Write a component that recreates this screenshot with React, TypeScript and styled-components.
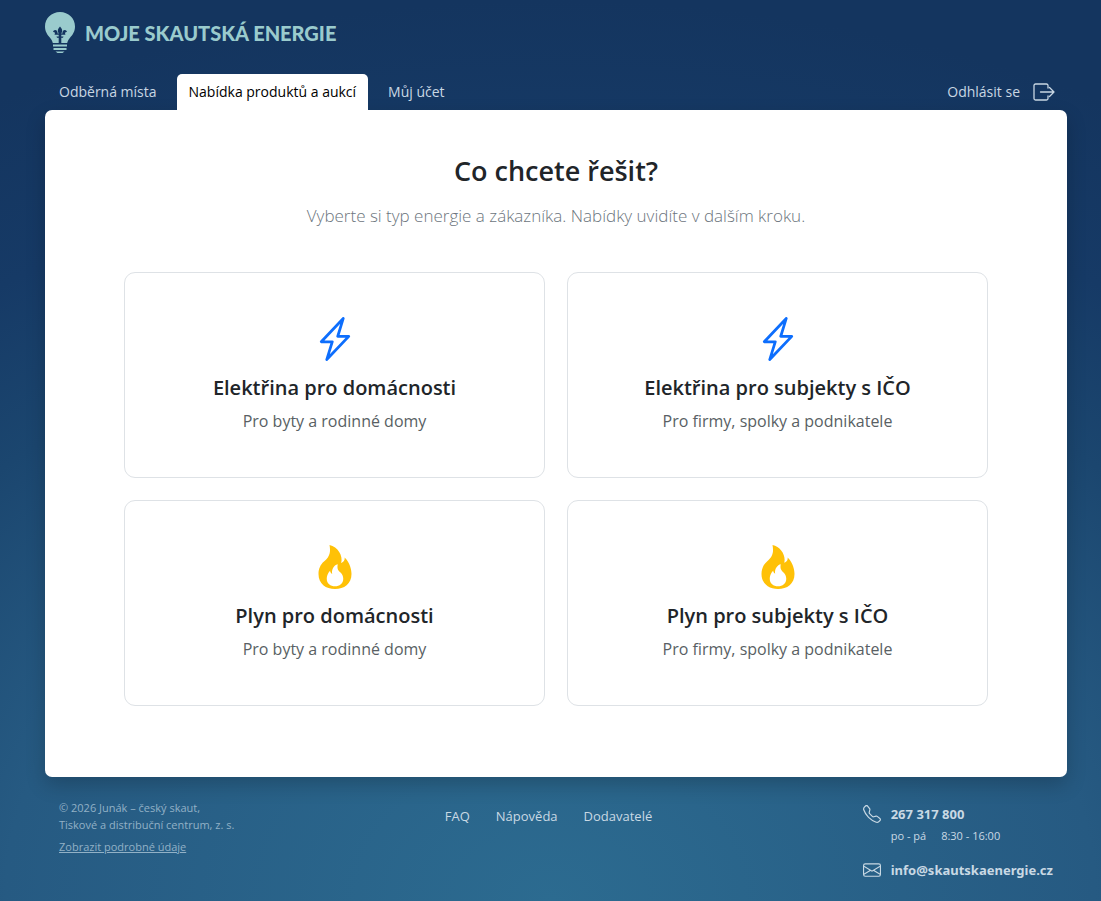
import React from "react";
import styled, { createGlobalStyle } from "styled-components";
import { BsEnvelope, BsFire, BsLightningCharge, BsTelephone } from "react-icons/bs";

const GlobalStyle = createGlobalStyle`
  *, *::before, *::after { box-sizing: border-box; }
  body {
    margin: 0;
    background: #14355f;
    color: #212529;
    font-family: "Segoe UI", "Open Sans", "Noto Sans", sans-serif;
    font-size: 13px;
    line-height: 20px;
  }
`;

const Page = styled.div`
  min-height: 100vh;
  padding: 0 34px 0 45px;
  background: radial-gradient(
    ellipse 110% 100% at 50% 100%,
    #2c6b90 0%,
    #265a82 45%,
    #1b466f 66%,
    #163a66 82%,
    #14355f 100%
  );
`;

const Header = styled.header`
  padding-top: 11px;
`;

const Brand = styled.a`
  display: flex;
  align-items: center;
  gap: 10px;
  width: fit-content;
  height: 43px;
  color: #9acbcd;
  font-family: Lato, sans-serif;
  font-size: 20px;
  font-weight: 900;
  text-decoration: none;
  text-transform: uppercase;
`;

const NavBar = styled.nav`
  display: flex;
  align-items: stretch;
  gap: 8px;
  margin-top: 20px;
  padding-left: 2px;
  height: 36px;
  font-size: 14px;
`;

const NavLink = styled.a<{ $active?: boolean }>`
  display: flex;
  align-items: center;
  gap: 13px;
  padding: 0 12px;
  border-radius: 5px 5px 0 0;
  background: ${(p) => (p.$active ? "#fff" : "transparent")};
  color: ${(p) => (p.$active ? "#000" : "#c9d7e3")};
  text-decoration: none;
`;

const LogoutLink = styled(NavLink)`
  margin-left: auto;
`;

const Panel = styled.main`
  padding: 43px 79px 71px;
  border-radius: 7px;
  background: #fff;
  box-shadow: 0 8px 20px rgba(0, 0, 0, 0.2);
  text-align: center;
`;

const Title = styled.h1`
  margin: 0;
  font-size: 27px;
  font-weight: 600;
  line-height: 36px;
`;

const Lead = styled.p`
  margin: 12px 0 42px;
  color: #6c757d;
  font-size: 17px;
  font-weight: 300;
  line-height: 29px;
`;

const CardGrid = styled.div`
  display: grid;
  grid-template-columns: repeat(2, 1fr);
  gap: 22px;
`;

const Card = styled.a`
  display: flex;
  flex-direction: column;
  align-items: center;
  padding: 44px 20px 43px;
  border: 1px solid #dee2e6;
  border-radius: 11px;
  color: inherit;
  text-decoration: none;
`;

const CardIcon = styled.span<{ $color: string }>`
  display: flex;
  color: ${(p) => p.$color};
  font-size: 44px;
`;

const CardTitle = styled.h2`
  margin: 13px 0 7px;
  font-size: 20px;
  font-weight: 600;
  line-height: 28px;
`;

const CardText = styled.p`
  margin: 0;
  color: #595f64;
  font-size: 16px;
  line-height: 25px;
`;

const Footer = styled.footer`
  display: flex;
  justify-content: space-between;
  padding: 22px 14px 14px;
  color: #c9d9e4;
`;

const Legal = styled.div`
  color: #92b1c6;
  font-size: 11px;
  line-height: 17px;

  p { margin: 0 0 5px; }
  a { color: inherit; }
`;

const FooterNav = styled.nav`
  display: flex;
  gap: 26px;
  padding-top: 7px;

  a { color: inherit; text-decoration: none; }
`;

const Contacts = styled.address`
  display: grid;
  grid-template-columns: 18px auto;
  column-gap: 10px;
  align-items: center;
  padding-top: 5px;
  font-style: normal;
`;

const ContactLink = styled.a`
  color: inherit;
  font-family: "Segoe UI", "Noto Sans", sans-serif;
  font-weight: 700;
  text-decoration: none;
`;

const Hours = styled.div`
  display: flex;
  grid-column: 2;
  gap: 15px;
  margin: 2px 0 14px;
  font-size: 11px;
`;

const BulbLogo = () => (
  <svg width="30" height="43" viewBox="0 0 30 43" aria-hidden="true">
    <path
      fill="currentColor"
      d="M15 1C6.500 1 0 7.400 0 15.500c0 5 2.300 8.200 5 11.200 1.800 2 2.300 3.600 2.800 5.300h14.400c.5-1.700 1-3.300 2.800-5.300 2.700-3 5-6.200 5-11.200C30 7.400 23.500 1 15 1z"
    />
    <path
      fill="#14355f"
      d="M15 15.500c-1.500 1.800-2.200 3-2.200 4.300 0 1 .5 1.900 1 2.700h-1.200c.2-2-.8-3.600-2.400-3.600-1.300 0-2.300 1.100-2.100 2.400.5-.4 1.300-.3 1.600.3.400.8.100 1.500-.2 2.100h4.200v1.800h-2.200c.1 1 .9 1.700 2.200 1.300V32h2.600v-5.200c1.300.4 2.100-.3 2.200-1.300h-2.200v-1.800h4.200c-.3-.6-.6-1.300-.2-2.100.3-.6 1.100-.7 1.600-.3.200-1.300-.8-2.400-2.100-2.400-1.600 0-2.600 1.600-2.400 3.600h-1.200c.5-.8 1-1.700 1-2.700 0-1.300-.7-2.500-2.200-4.300z"
    />
    <path fill="currentColor" d="M8 33.500h14v2H8zM8.500 37h13v2h-13zM10.500 40.500h9l-2 1.500h-5z" />
  </svg>
);

const LogoutIcon = () => (
  <svg
    width="22"
    height="18"
    viewBox="0 0 22 18"
    fill="none"
    stroke="currentColor"
    strokeWidth="1.3"
    strokeLinecap="round"
    strokeLinejoin="round"
    aria-hidden="true"
  >
    <path d="M15 5V2.500A1.500 1.500 0 0 0 13.500 1h-11A1.500 1.500 0 0 0 1 2.500v13A1.500 1.500 0 0 0 2.500 17h11a1.500 1.500 0 0 0 1.500-1.500V13M7.500 9H21M16.500 4.500 21 9l-4.500 4.500" />
  </svg>
);

const offers = [
  { title: "Elektřina pro domácnosti", text: "Pro byty a rodinné domy", Icon: BsLightningCharge, color: "#0d6efd" },
  { title: "Elektřina pro subjekty s IČO", text: "Pro firmy, spolky a podnikatele", Icon: BsLightningCharge, color: "#0d6efd" },
  { title: "Plyn pro domácnosti", text: "Pro byty a rodinné domy", Icon: BsFire, color: "#ffc107" },
  { title: "Plyn pro subjekty s IČO", text: "Pro firmy, spolky a podnikatele", Icon: BsFire, color: "#ffc107" },
];

export default function App() {
  return (
    <>
      <GlobalStyle />
      <Page>
        <Header>
          <Brand href="#">
            <BulbLogo />
            Moje skautská energie
          </Brand>
          <NavBar>
            <NavLink href="#">Odběrná místa</NavLink>
            <NavLink href="#" $active aria-current="page">Nabídka produktů a aukcí</NavLink>
            <NavLink href="#">Můj účet</NavLink>
            <LogoutLink href="#">
              Odhlásit se
              <LogoutIcon />
            </LogoutLink>
          </NavBar>
        </Header>
        <Panel>
          <Title>Co chcete řešit?</Title>
          <Lead>Vyberte si typ energie a zákazníka. Nabídky uvidíte v dalším kroku.</Lead>
          <CardGrid>
            {offers.map(({ title, text, Icon, color }) => (
              <Card href="#" key={title}>
                <CardIcon $color={color}><Icon aria-hidden /></CardIcon>
                <CardTitle>{title}</CardTitle>
                <CardText>{text}</CardText>
              </Card>
            ))}
          </CardGrid>
        </Panel>
        <Footer>
          <Legal>
            <p>
              © 2026 Junák – český skaut,
              <br />
              Tiskové a distribuční centrum, z. s.
            </p>
            <a href="#">Zobrazit podrobné údaje</a>
          </Legal>
          <FooterNav>
            <a href="#">FAQ</a>
            <a href="#">Nápověda</a>
            <a href="#">Dodavatelé</a>
          </FooterNav>
          <Contacts>
            <BsTelephone size={18} aria-hidden />
            <ContactLink href="tel:267317800">267 317 800</ContactLink>
            <Hours>
              <span>po - pá</span>
              <span>8:30 - 16:00</span>
            </Hours>
            <BsEnvelope size={18} aria-hidden />
            <ContactLink href="mailto:info@skautskaenergie.cz">info@skautskaenergie.cz</ContactLink>
          </Contacts>
        </Footer>
      </Page>
    </>
  );
}
